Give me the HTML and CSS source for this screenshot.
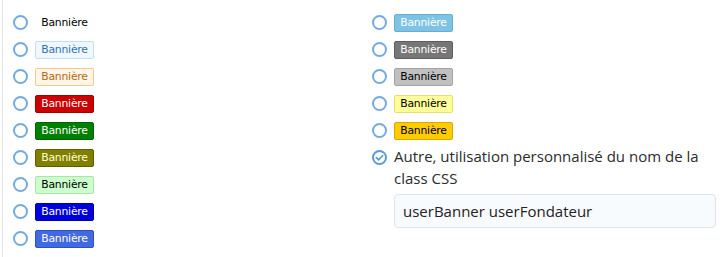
FILE: index.html
```html
<!DOCTYPE html>
<html lang="fr">
<head>
    <meta charset="UTF-8">
    <meta name="viewport" content="width=device-width, initial-scale=1.0">
    <title>Bannière</title>
    <link rel="stylesheet" href="styles.css">
</head>
<body>
    <div class="panel">
        <ul class="choices">
            <li class="choice"><span class="radio"></span><span class="banner plain">Bannière</span></li>
            <li class="choice"><span class="radio"></span><span class="banner blue-light">Bannière</span></li>
            <li class="choice"><span class="radio"></span><span class="banner orange-light">Bannière</span></li>
            <li class="choice"><span class="radio"></span><span class="banner red">Bannière</span></li>
            <li class="choice"><span class="radio"></span><span class="banner green">Bannière</span></li>
            <li class="choice"><span class="radio"></span><span class="banner olive">Bannière</span></li>
            <li class="choice"><span class="radio"></span><span class="banner lime-light">Bannière</span></li>
            <li class="choice"><span class="radio"></span><span class="banner blue">Bannière</span></li>
            <li class="choice"><span class="radio"></span><span class="banner royal">Bannière</span></li>
        </ul>
        <ul class="choices">
            <li class="choice"><span class="radio"></span><span class="banner sky">Bannière</span></li>
            <li class="choice"><span class="radio"></span><span class="banner gray">Bannière</span></li>
            <li class="choice"><span class="radio"></span><span class="banner silver">Bannière</span></li>
            <li class="choice"><span class="radio"></span><span class="banner yellow">Bannière</span></li>
            <li class="choice"><span class="radio"></span><span class="banner gold">Bannière</span></li>
            <li class="choice custom">
                <span class="radio checked">
                    <svg width="15" height="15" viewBox="0 0 15 15">
                        <polyline points="4.3,7.7 6.6,9.9 10.7,5.5" fill="none" stroke="#5c9ad6" stroke-width="1.6" stroke-linecap="round" stroke-linejoin="round"/>
                    </svg>
                </span>
                <div class="custom-body">
                    <div class="custom-label">Autre, utilisation personnalisé du nom de la class CSS</div>
                    <div class="text-input">userBanner userFondateur</div>
                </div>
            </li>
        </ul>
    </div>
</body>
</html>
```

FILE: styles.css
```css
body {
    margin: 0;
    background-color: #fff;
    font-family: "Open Sans", "Noto Sans", sans-serif;
}
.panel {
    margin-left: 2px;
    border-left: 1px solid #e4e4e4;
    height: 257px;
    box-sizing: border-box;
    padding: 9px 7px 0 10px;
    display: grid;
    grid-template-columns: 359px 1fr;
}
.choices {
    list-style: none;
    margin: 0;
    padding: 0;
}
.choice {
    display: flex;
    align-items: center;
    gap: 7px;
    height: 27px;
}
.radio {
    flex: none;
    width: 15px;
    height: 15px;
    box-sizing: border-box;
    border: 2px solid #74aadf;
    border-radius: 50%;
    position: relative;
}
.radio svg {
    position: absolute;
    left: -2px;
    top: -2px;
}
.radio.checked {
    border-color: #5c9ad6;
}
.banner {
    width: 59px;
    height: 18px;
    box-sizing: border-box;
    border: 1px solid transparent;
    border-radius: 2px;
    font-family: "DejaVu Sans", sans-serif;
    font-size: 10.8px;
    line-height: 16px;
    text-align: center;
    letter-spacing: -0.2px;
    color: #000;
}
.blue-light { background-color: #f0f8fe; border-color: #c2e0f4; color: #2f74b5; }
.orange-light { background-color: #fff5e8; border-color: #f3c98c; color: #b36b12; }
.red { background-color: #cc0000; border-color: #a30000; color: #fff; }
.green { background-color: #008000; border-color: #006400; color: #fff; }
.olive { background-color: #808000; border-color: #5e5e00; color: #ffffd8; }
.lime-light { background-color: #ccffcc; border-color: #a8e6a8; color: #000; }
.blue { background-color: #0000dd; border-color: #0000a8; color: #fff; }
.royal { background-color: #4169e1; border-color: #2f52bf; color: #fff; }
.sky { background-color: #7ec3e4; border-color: #66afd3; color: #fff; }
.gray { background-color: #777; border-color: #5e5e5e; color: #fff; }
.silver { background-color: #c0c0c0; border-color: #a4a4a4; color: #000; }
.yellow { background-color: #ffff99; border-color: #e6e070; color: #000; }
.gold { background-color: #ffcc00; border-color: #d9a800; color: #000; }
.custom {
    height: auto;
    align-items: flex-start;
    padding-top: 2px;
}
.custom .radio {
    margin-top: 4px;
}
.custom-body {
    flex: 1;
}
.custom-label {
    font-size: 15px;
    line-height: 22px;
    color: #2b2b2b;
    margin-top: -1px;
}
.text-input {
    margin-top: 5px;
    height: 34px;
    box-sizing: border-box;
    border: 1px solid #dfe4ea;
    border-radius: 4px;
    background-color: #f8fbfe;
    padding: 0 8px;
    font-size: 15px;
    line-height: 32px;
    color: #222;
}
```
